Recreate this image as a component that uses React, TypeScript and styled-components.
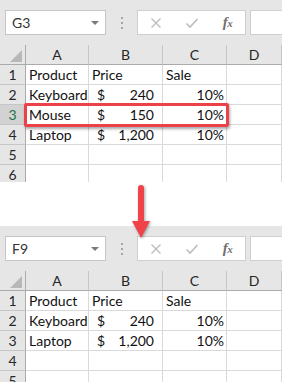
import React from "react";
import styled, { createGlobalStyle } from "styled-components";

const GlobalStyle = createGlobalStyle`
  html, body { margin: 0; padding: 0; background: #ffffff; }
  body { width: 282px; height: 382px; overflow: hidden; font-family: Lato, "Open Sans", sans-serif; }
  * { box-sizing: border-box; }
`;

const Page = styled.div`
  position: relative;
  width: 282px;
  height: 382px;
  overflow: hidden;
  display: flex;
  flex-direction: column;
  gap: 44px;
`;

const Panel = styled.section<{ $height?: number }>`
  position: relative;
  flex: none;
  background: #ffffff;
  overflow: hidden;
  height: ${(p) => (p.$height ? `${p.$height}px` : "auto")};
`;

const Toolbar = styled.div`
  display: flex;
  align-items: flex-start;
  height: 45px;
  padding: 10px 0 10px 5px;
  background: #e6e6e6;
`;

const NameBox = styled.div`
  width: 101px;
  height: 25px;
  border: 1px solid #c6c6c6;
  background: #ffffff;
  display: flex;
  align-items: center;
  justify-content: space-between;
  padding: 0 6px 0 6px;
  font-size: 14px;
  color: #333333;
`;

const DropTriangle = styled.span`
  width: 0;
  height: 0;
  border-left: 4px solid transparent;
  border-right: 4px solid transparent;
  border-top: 4px solid #7a7a7a;
`;

const Grip = styled.div`
  width: 31px;
  height: 25px;
  display: flex;
  flex-direction: column;
  align-items: center;
  justify-content: center;
  gap: 3px;
`;

const GripDot = styled.span`
  width: 2px;
  height: 2px;
  background: #a6a6a6;
`;

const FxBox = styled.div`
  width: 109px;
  height: 25px;
  border: 1px solid #cfcfcf;
  background: #ffffff;
  display: grid;
  grid-template-columns: 36px 36px 35px;
  align-items: center;
  justify-items: center;
`;

const FxText = styled.span`
  font-family: "Liberation Serif", serif;
  font-style: italic;
  font-weight: bold;
  font-size: 15px;
  color: #707070;
  letter-spacing: -0.5px;
  & > small { font-size: 11px; }
`;

const FormulaInput = styled.div`
  flex: 1;
  margin-left: 4px;
  height: 25px;
  border: 1px solid #cfcfcf;
  border-right: none;
  background: #ffffff;
`;

const GridRow = styled.div`
  display: grid;
  grid-template-columns: 26px 63px 74px 64px 1fr;
  height: 20px;
`;

const Corner = styled.div`
  background: #e6e6e6;
  border-right: 1px solid #ababab;
  border-bottom: 1px solid #ababab;
  display: flex;
  align-items: flex-end;
  justify-content: flex-end;
  padding: 0 3px 2px 0;
`;

const ColHead = styled.div`
  background: #e6e6e6;
  border-right: 1px solid #c6c6c6;
  border-bottom: 1px solid #ababab;
  display: flex;
  align-items: center;
  justify-content: center;
  font-size: 14px;
  color: #262626;
`;

const RowHead = styled.div<{ $selected?: boolean }>`
  background: ${(p) => (p.$selected ? "#d2d2d2" : "#e6e6e6")};
  color: ${(p) => (p.$selected ? "#217346" : "#262626")};
  border-right: 1px solid #ababab;
  border-bottom: 1px solid #c6c6c6;
  display: flex;
  align-items: center;
  justify-content: center;
  font-size: 14px;
`;

const Cell = styled.div<{ $align?: "left" | "right" | "acct" }>`
  border-right: 1px solid #dadada;
  border-bottom: 1px solid #dadada;
  display: flex;
  align-items: center;
  justify-content: ${(p) =>
    p.$align === "right" ? "flex-end" : p.$align === "acct" ? "space-between" : "flex-start"};
  padding: ${(p) => (p.$align === "acct" ? "0 8px 0 8px" : p.$align === "right" ? "0 2px 0 3px" : "0 3px")};
  font-size: 14px;
  color: #111111;
  white-space: nowrap;
`;

const Highlight = styled.div`
  position: absolute;
  left: 24px;
  top: 103px;
  width: 205px;
  height: 24px;
  border: 3px solid #ec4148;
  border-radius: 2px;
  box-shadow: 1px 2px 3px rgba(0, 0, 0, 0.35);
  pointer-events: none;
`;

const ArrowSvg = styled.svg`
  position: absolute;
  left: 131px;
  top: 183px;
  filter: drop-shadow(1px 1px 1.5px rgba(0, 0, 0, 0.35));
`;

type Row = { product: string; price: string; sale: string } | null;

const XIcon = () => (
  <svg width="12" height="12" viewBox="0 0 12 12">
    <path d="M1.5 1.5 L10.5 10.5 M10.5 1.5 L1.5 10.5" stroke="#bdbdbd" strokeWidth="1.4" fill="none" />
  </svg>
);

const CheckIcon = () => (
  <svg width="14" height="12" viewBox="0 0 14 12">
    <path d="M1.5 6.5 L5 10 L12.5 2" stroke="#bdbdbd" strokeWidth="1.6" fill="none" />
  </svg>
);

const Sheet: React.FC<{ name: string; rows: Row[]; selected?: number; height?: number; highlight?: boolean }> = ({
  name,
  rows,
  selected,
  height,
  highlight,
}) => (
  <Panel $height={height}>
    <Toolbar>
      <NameBox>
        <span>{name}</span>
        <DropTriangle />
      </NameBox>
      <Grip>
        <GripDot />
        <GripDot />
        <GripDot />
      </Grip>
      <FxBox>
        <XIcon />
        <CheckIcon />
        <FxText>
          f<small>x</small>
        </FxText>
      </FxBox>
      <FormulaInput />
    </Toolbar>
    <GridRow>
      <Corner>
        <svg width="12" height="12" viewBox="0 0 12 12">
          <polygon points="12,0 12,12 0,12" fill="#b8b8b8" />
        </svg>
      </Corner>
      <ColHead>A</ColHead>
      <ColHead>B</ColHead>
      <ColHead>C</ColHead>
      <ColHead>D</ColHead>
    </GridRow>
    <GridRow>
      <RowHead>1</RowHead>
      <Cell>Product</Cell>
      <Cell>Price</Cell>
      <Cell>Sale</Cell>
      <Cell />
    </GridRow>
    {rows.map((r, i) => (
      <GridRow key={i}>
        <RowHead $selected={selected === i + 2}>{i + 2}</RowHead>
        <Cell>{r ? r.product : ""}</Cell>
        <Cell $align="acct">
          {r ? (
            <>
              <span>$</span>
              <span>{r.price}</span>
            </>
          ) : null}
        </Cell>
        <Cell $align="right">{r ? r.sale : ""}</Cell>
        <Cell />
      </GridRow>
    ))}
    {highlight && <Highlight />}
  </Panel>
);

export default function App() {
  return (
    <>
      <GlobalStyle />
      <Page>
        <Sheet
          name="G3"
          height={182}
          selected={3}
          highlight
          rows={[
            { product: "Keyboard", price: "240", sale: "10%" },
            { product: "Mouse", price: "150", sale: "10%" },
            { product: "Laptop", price: "1,200", sale: "10%" },
            null,
            null,
          ]}
        />
        <Sheet
          name="F9"
          rows={[
            { product: "Keyboard", price: "240", sale: "10%" },
            { product: "Laptop", price: "1,200", sale: "10%" },
            null,
            null,
          ]}
        />
        <ArrowSvg width="22" height="58" viewBox="0 0 22 58">
          <rect x="7" y="2" width="6" height="40" rx="3" fill="#ef4249" />
          <polygon points="1,38 19,38 10,55" fill="#ef4249" />
        </ArrowSvg>
      </Page>
    </>
  );
}
